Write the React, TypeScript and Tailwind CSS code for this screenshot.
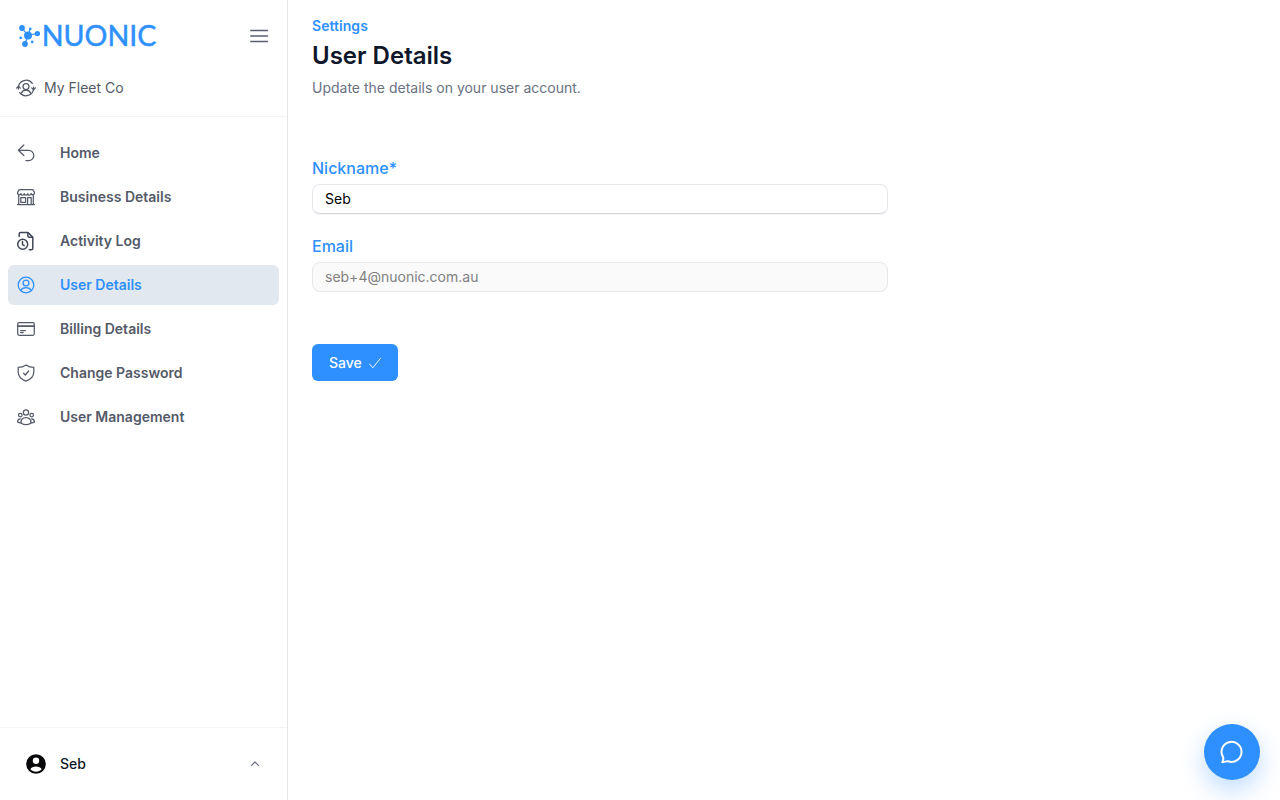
import React from "react";

type IconProps = {
  children: React.ReactNode;
  className?: string;
};

const Icon = ({ children, className = "" }: IconProps) => (
  <svg
    viewBox="0 0 20 20"
    fill="none"
    stroke="currentColor"
    strokeWidth={1.25}
    strokeLinecap="round"
    strokeLinejoin="round"
    className={`size-5 shrink-0 ${className}`}
  >
    {children}
  </svg>
);

const SwitchIcon = () => (
  <Icon>
    <path d="M2.400 11V9.500A7.700 7.700 0 0 1 16.300 5.400M17.600 9v1.500A7.700 7.700 0 0 1 3.700 14.600" />
    <path d="M.6 10.100l1.800-1.900 1.900 1.900M15.700 9.900l1.900 1.900 1.800-1.900" />
    <circle cx="10" cy="8.600" r="3" />
    <path d="M5.300 15.300c.8-2 2.600-3.100 4.700-3.100s3.900 1.100 4.700 3.100" />
  </Icon>
);

const HomeIcon = () => (
  <Icon>
    <path d="M7.800 2L2.400 7.300l5.400 5.200M2.400 7.300h10.200a5.200 5.200 0 0 1 0 10.400H10" />
  </Icon>
);

const ShopIcon = () => (
  <Icon>
    <path d="M3.200 2.600h13.600l1.600 2.700v1.200a1.700 1.700 0 0 1-3.300 0 1.700 1.700 0 0 1-3.400 0 1.700 1.700 0 0 1-3.400 0 1.700 1.700 0 0 1-3.400 0 1.700 1.700 0 0 1-3.300 0V5.300z" />
    <path d="M2.700 8.400v9M17.300 8.400v9M1.500 17.500h17" />
    <path d="M4.800 10.500h4.800v4.800H4.800zM11.600 17.400v-6.900h3.600v6.900" />
  </Icon>
);

const ActivityIcon = () => (
  <Icon className="text-[#404655]">
    <g strokeWidth={1.5}>
      <path d="M3.200 5.500V3.100c0-.9.600-1.500 1.500-1.500H12l4.800 4.600v11c0 .9-.6 1.500-1.500 1.500h-2" />
      <path d="M11.900 1.700v3.300c0 .8.500 1.300 1.300 1.300h3.400" />
      <circle cx="6.700" cy="13.200" r="5" />
      <path d="M6.500 10.600v2.900l1.700 1.100" />
    </g>
  </Icon>
);

const UserIcon = () => (
  <Icon>
    <circle cx="10" cy="10" r="7.800" />
    <circle cx="10" cy="7.900" r="2.900" />
    <path d="M4.700 15.500c1.100-2 3-3 5.300-3s4.200 1 5.300 3" />
  </Icon>
);

const CardIcon = () => (
  <Icon>
    <rect x="1.700" y="3.700" width="16.600" height="12.600" rx="1.500" />
    <path d="M1.700 7.100h16.600" strokeWidth={1.7} />
    <path d="M4.600 11.500h4.800M4.600 13.500h2.600" />
  </Icon>
);

const ShieldIcon = () => (
  <Icon>
    <path d="M10 1.900c2.300 1.600 4.700 2.400 7.800 2.500v4.500c0 4.200-3 7.300-7.800 9.200-4.800-1.900-7.800-5-7.800-9.200V4.400c3.100-.1 5.500-.9 7.800-2.500z" />
    <path d="M7.600 10.300l1.700 1.700 3.300-4" />
  </Icon>
);

const TeamIcon = () => (
  <Icon>
    <circle cx="10" cy="5.400" r="2.600" />
    <circle cx="4.300" cy="8.100" r="1.800" />
    <circle cx="15.700" cy="8.100" r="1.800" />
    <path d="M5.200 16.200c-.7-3.500 1.600-5.700 4.800-5.700s5.500 2.200 4.800 5.700c-2.700 1.600-6.900 1.600-9.600 0z" />
    <path d="M4.300 11.900c-1.700.1-2.700 1.300-2.700 3.100.9.700 2.100 1 3.400.9M15.700 11.900c1.700.1 2.700 1.300 2.700 3.100-.9.700-2.100 1-3.400.9" />
  </Icon>
);

const Logo = () => (
  <svg viewBox="0 0 150 40" className="h-10 w-[150px]" fill="#2e90ff">
    <g stroke="#2e90ff" strokeWidth="1.2">
      <path d="M12 19.500L6 12M12 19.500l9-2M12 19.500L9 28M12 19.500l2.300-7" />
    </g>
    <circle cx="12" cy="19.400" r="4" />
    <circle cx="6" cy="12" r="2.900" />
    <circle cx="21.400" cy="17.600" r="2.700" />
    <circle cx="9" cy="28" r="2.900" />
    <circle cx="14.300" cy="12.900" r="1.300" />
    <circle cx="4.700" cy="21.900" r="1.300" />
    <circle cx="16.200" cy="25.900" r="1.300" />
    <text
      x="25.800"
      y="30.200"
      fontSize="28.500"
      textLength="114.500"
      lengthAdjust="spacingAndGlyphs"
      stroke="#2e90ff"
      strokeWidth="0.500"
      strokeLinejoin="round"
      className="font-['Lato',sans-serif]"
    >
      NUONIC
    </text>
  </svg>
);

const navItems = [
  { label: "Home", icon: <HomeIcon /> },
  { label: "Business Details", icon: <ShopIcon /> },
  { label: "Activity Log", icon: <ActivityIcon /> },
  { label: "User Details", icon: <UserIcon />, active: true },
  { label: "Billing Details", icon: <CardIcon /> },
  { label: "Change Password", icon: <ShieldIcon /> },
  { label: "User Management", icon: <TeamIcon /> },
];

const Sidebar = () => {
  return (
    <aside className="flex w-72 shrink-0 flex-col border-r border-gray-200">
      <div className="h-[117px] border-b border-gray-100">
        <div className="flex h-[72px] items-center justify-between pl-4 pr-[18px]">
          <Logo />
          <svg
            viewBox="0 0 20 20"
            className="size-5 text-[#5a6070]"
            stroke="currentColor"
            strokeWidth="1.5"
            strokeLinecap="round"
          >
            <path d="M1.800 4.600h16.700M1.800 10h16.700M1.800 15.400h16.700" />
          </svg>
        </div>
        <div className="flex h-8 items-center gap-2 px-4 text-sm text-[#555a68]">
          <SwitchIcon />
          My Fleet Co
        </div>
      </div>
      <nav className="flex flex-1 flex-col gap-1 px-2 pt-4">
        {navItems.map((item) => (
          <a
            key={item.label}
            href="#"
            className={`flex h-10 items-center gap-6 rounded-md px-2 text-sm font-semibold ${
              item.active ? "bg-slate-200 text-[#2e90ff]" : "text-[#555a68]"
            }`}
          >
            {item.icon}
            {item.label}
          </a>
        ))}
      </nav>
      <div className="flex h-[73px] items-center border-t border-gray-100 pl-[26px] pr-[27px]">
        <svg viewBox="0 0 20 20" className="size-5">
          <circle cx="10" cy="10" r="9.800" fill="#09090b" />
          <circle cx="10" cy="6.800" r="3.200" fill="white" />
          <path
            d="M4.300 15.300c1-1.900 3.200-2.800 5.700-2.800s4.700.9 5.700 2.800c-1.500 1.600-3.400 2.400-5.700 2.400s-4.200-.8-5.700-2.400z"
            fill="white"
          />
        </svg>
        <span className="ml-3.5 text-sm font-medium text-[#0f172a]">Seb</span>
        <svg
          viewBox="0 0 10 10"
          className="ml-auto size-2.5 text-gray-500"
          fill="none"
          stroke="currentColor"
          strokeWidth="1.2"
          strokeLinecap="round"
          strokeLinejoin="round"
        >
          <path d="M1.300 6.600L5 3l3.700 3.600" />
        </svg>
      </div>
    </aside>
  );
};

const UserDetails = () => {
  return (
    <main className="flex-1 px-6 pt-4">
      <p className="text-sm font-semibold tracking-[0.05px] text-[#2e90ff]">
        Settings
      </p>
      <h1 className="mt-[5px] text-2xl font-semibold leading-[30px] text-[#0f172a]">
        User Details
      </h1>
      <p className="mt-[7px] text-sm text-gray-500">
        Update the details on your user account.
      </p>
      <form className="mt-[58px] w-xl">
        <label className="block font-medium text-[#2e90ff]">Nickname*</label>
        <input
          defaultValue="Seb"
          className="mt-1 block h-[30px] w-full rounded-lg border border-gray-200 border-b-gray-300 px-3 pb-0.5 text-sm text-black shadow-[0_1px_1px_rgba(0,0,0,0.05)]"
        />
        <label className="mt-5 block font-medium text-[#2e90ff]">Email</label>
        <input
          disabled
          defaultValue="seb+4@nuonic.com.au"
          className="mt-1 block h-[30px] w-full rounded-lg border border-gray-200 bg-[#fafafa] px-3 pb-0.5 text-sm text-[#808080]"
        />
        <button
          type="button"
          className="mt-[52px] flex h-[37px] w-[86px] items-center rounded-md bg-[#2e90ff] pl-[17px] text-sm font-medium text-white"
        >
          Save
          <svg
            viewBox="0 0 12 12"
            className="ml-[7px] size-3"
            fill="none"
            stroke="currentColor"
            strokeWidth="0.9"
            strokeLinecap="round"
            strokeLinejoin="round"
          >
            <path d="M.6 7l3.200 3.800L11.500 1.300" />
          </svg>
        </button>
      </form>
    </main>
  );
};

const ChatButton = () => (
  <button
    type="button"
    className="fixed bottom-5 right-5 grid size-14 place-items-center rounded-full bg-[#2e90ff] text-white shadow-[0_10px_24px_rgba(46,144,255,0.3)]"
  >
    <svg
      viewBox="0 0 24 24"
      className="size-6"
      fill="none"
      stroke="currentColor"
      strokeWidth="2"
      strokeLinecap="round"
      strokeLinejoin="round"
    >
      <path d="M2.200 22.200c1-1.500 1.400-3.100 1-4.800A10 10 0 1 1 8.200 21.300c-1.900-.5-3.500.9-6 .9z" />
    </svg>
  </button>
);

const App = () => {
  return (
    <div className="flex h-screen bg-white font-['Inter',sans-serif]">
      <Sidebar />
      <UserDetails />
      <ChatButton />
    </div>
  );
};

export default App;
